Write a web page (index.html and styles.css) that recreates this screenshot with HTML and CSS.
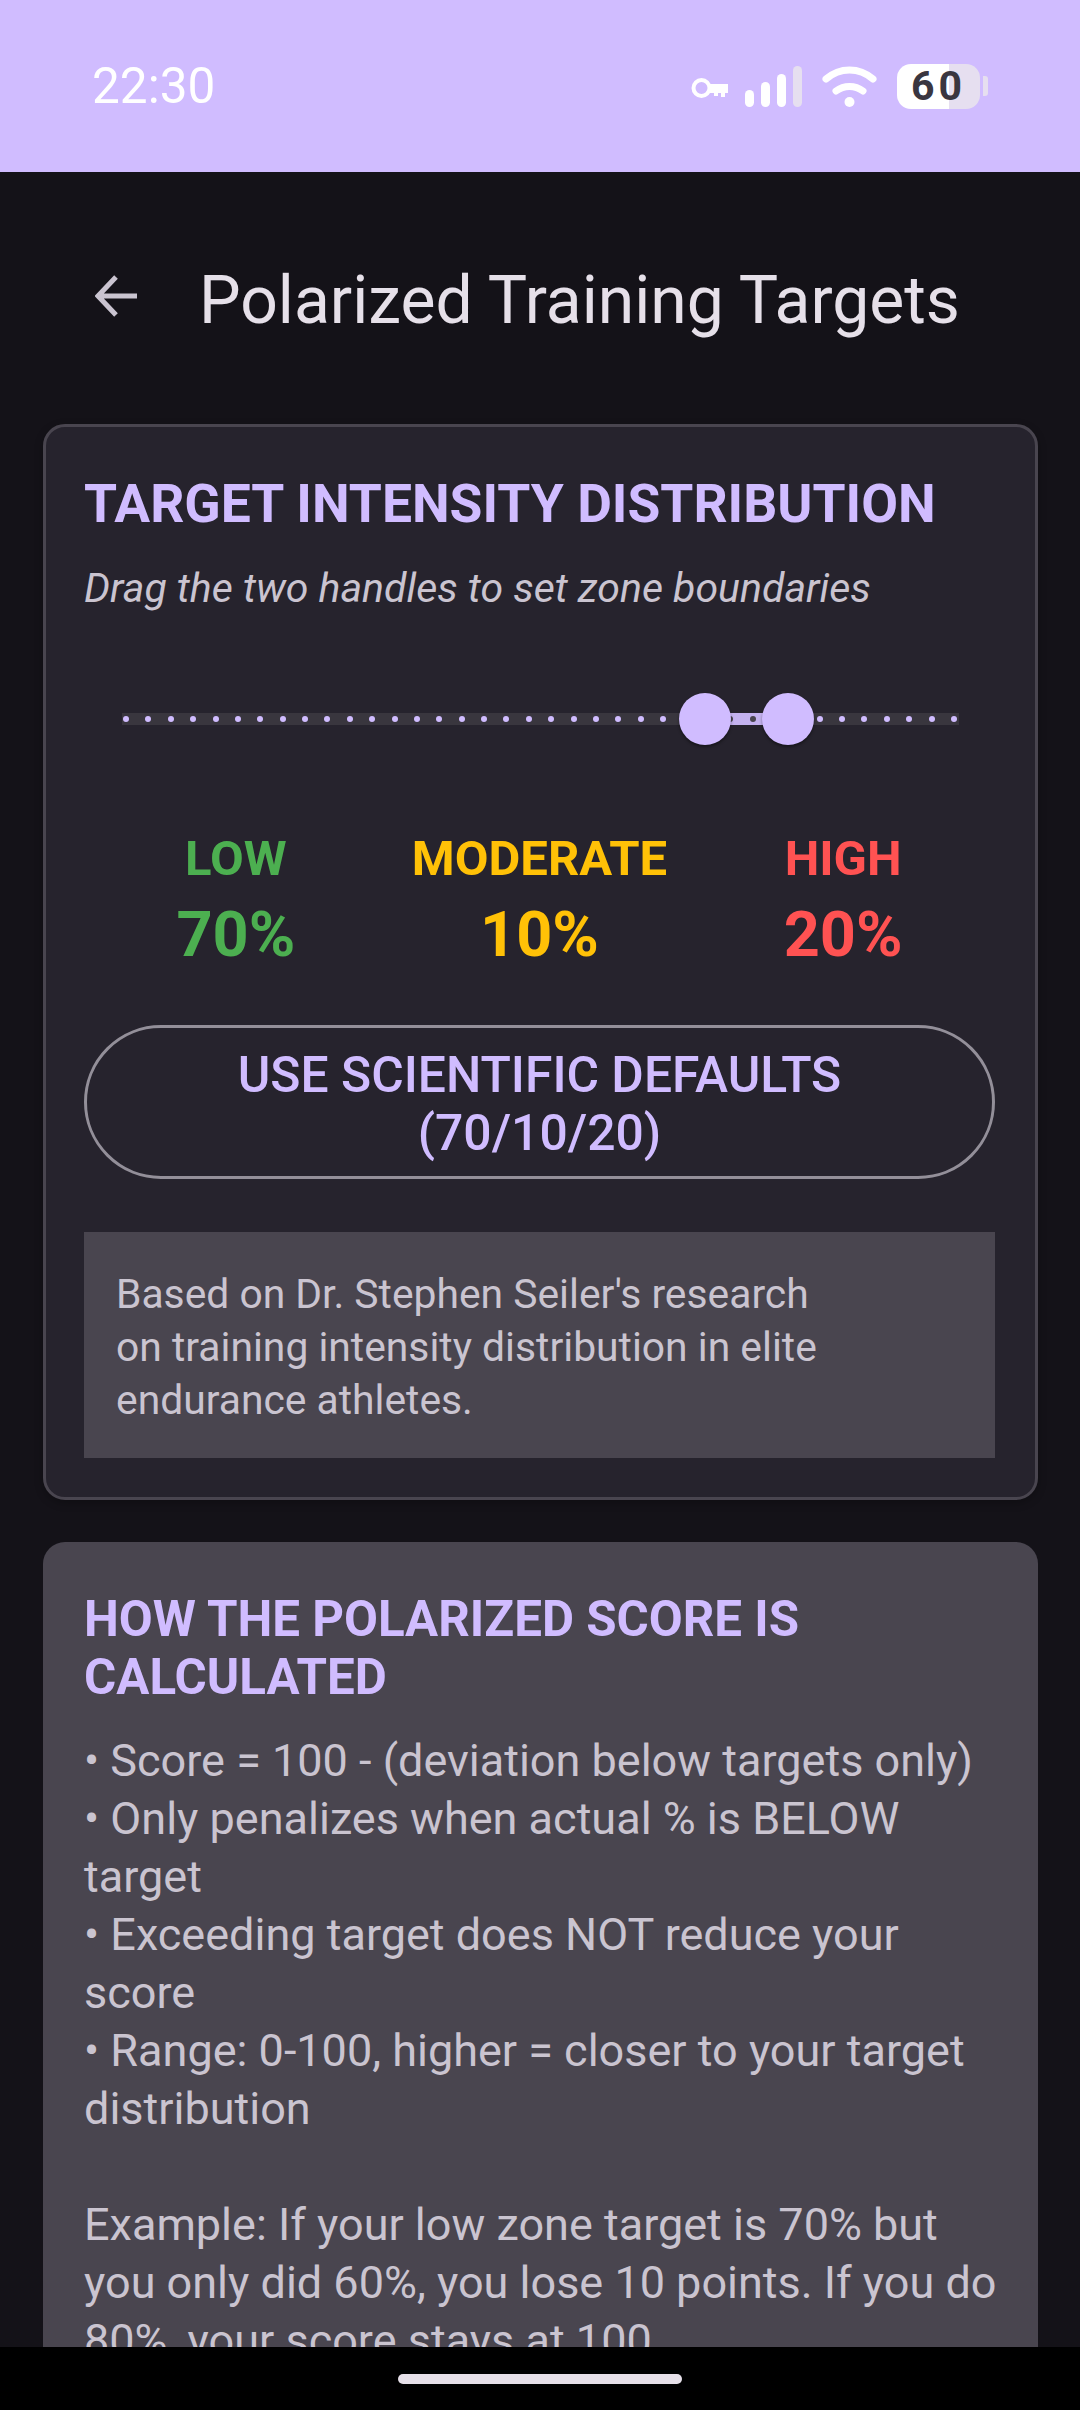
FILE: index.html
```html
<!DOCTYPE html>
<html lang="en">
<head>
    <meta charset="UTF-8">
    <meta name="viewport" content="width=device-width, initial-scale=1.0">
    <title>Polarized Training Targets</title>
    <link rel="stylesheet" href="styles.css">
</head>
<body>
    <div class="status-bar">
        <span class="clock">22:30</span>
        <div class="status-icons">
            <!-- VPN key -->
            <svg class="icon-key" width="37" height="22" viewBox="0 0 37 22">
                <circle cx="10.5" cy="11" r="8" fill="none" stroke="#fff" stroke-width="4"/>
                <path d="M18 7h19v9h-3v4h-4v-4h-3v3h-4v-3h-5z" fill="#fff"/>
            </svg>
            <!-- Signal -->
            <svg class="icon-signal" width="57" height="41" viewBox="0 0 57 41">
                <rect x="0" y="24" width="9" height="17" rx="4.5" fill="#fff"/>
                <rect x="16" y="16" width="9" height="25" rx="4.5" fill="#fff"/>
                <rect x="32" y="8" width="9" height="33" rx="4.5" fill="#fff"/>
                <rect x="48" y="0" width="9" height="41" rx="4.5" fill="#e6dff0"/>
            </svg>
            <!-- Wifi -->
            <svg class="icon-wifi" width="55" height="41" viewBox="0 0 55 41">
                <path d="M4 13C18 1 37 1 51 13" fill="none" stroke="#fff" stroke-width="7" stroke-linecap="round"/>
                <path d="M14 25C22 19 33 19 41 25" fill="none" stroke="#fff" stroke-width="7" stroke-linecap="round"/>
                <circle cx="27.5" cy="36" r="5" fill="#fff"/>
            </svg>
            <div class="battery">
                <div class="battery-body"><span class="battery-level">60</span></div>
                <div class="battery-tip"></div>
            </div>
        </div>
    </div>

    <div class="screen">
        <header class="app-bar">
            <svg class="back" width="42" height="42" viewBox="0 0 42 42">
                <path d="M42 21H4M21 2L3 21l18 19" fill="none" stroke="#cac4d0" stroke-width="5"/>
            </svg>
            <h1>Polarized Training Targets</h1>
        </header>

        <section class="card card-outline">
            <h2>TARGET INTENSITY DISTRIBUTION</h2>
            <p class="hint">Drag the two handles to set zone boundaries</p>

            <div class="slider">
                <div class="track">
                    <div class="track-active"></div>
                    <div class="ticks" id="ticks"></div>
                </div>
                <div class="thumb thumb-low"></div>
                <div class="thumb thumb-high"></div>
            </div>

            <div class="zones">
                <div class="zone zone-low"><span>LOW</span><strong>70%</strong></div>
                <div class="zone zone-moderate"><span>MODERATE</span><strong>10%</strong></div>
                <div class="zone zone-high"><span>HIGH</span><strong>20%</strong></div>
            </div>

            <button class="defaults">USE SCIENTIFIC DEFAULTS (70/10/20)</button>

            <p class="note">Based on Dr. Stephen Seiler's research on training intensity distribution in elite endurance athletes.</p>
        </section>

        <section class="card card-filled">
            <h2>HOW THE POLARIZED SCORE IS CALCULATED</h2>
            <p class="explain">• Score = 100 - (deviation below targets only)
• Only penalizes when actual % is BELOW target
• Exceeding target does NOT reduce your score
• Range: 0-100, higher = closer to your target distribution

Example: If your low zone target is 70% but you only did 60%, you lose 10 points. If you do 80%, your score stays at 100.</p>
        </section>
    </div>

    <div class="nav-bar"><div class="nav-handle"></div></div>

    <script>
        // 38 ticks on the slider, the ones between the handles are dark
        const ticks = document.getElementById('ticks');
        for (let i = 0; i < 38; i++) {
            const tick = document.createElement('i');
            if (i >= 26 && i <= 29) tick.className = 'on';
            ticks.appendChild(tick);
        }
    </script>
</body>
</html>
```

FILE: styles.css
```css
* {
    box-sizing: border-box;
}

body {
    margin: 0;
    width: 1080px;
    height: 2410px;
    display: flex;
    flex-direction: column;
    overflow: hidden;
    font-family: Roboto, sans-serif;
    background-color: #141218;
    color: #e6e0e9;
}

.status-bar {
    height: 172px;
    flex: none;
    background-color: #d0bcff;
    display: flex;
    justify-content: space-between;
    align-items: center;
    padding: 0 92px 0 92px;
    color: #fff;
}

.clock {
    font-size: 49.5px;
}

.status-icons {
    display: flex;
    align-items: center;
}

.icon-key {
    margin-right: 17px;
    margin-top: 4px;
}

.icon-signal {
    margin-right: 20px;
}

.icon-wifi {
    margin-right: 20px;
}

.battery {
    display: flex;
    align-items: center;
    gap: 3px;
}

.battery-body {
    width: 83px;
    height: 45px;
    border-radius: 14px;
    background: linear-gradient(to right, #fff 0, #fff 52px, #e6dff0 52px);
    color: #3a3640;
    font-size: 41px;
    font-weight: 700;
    letter-spacing: 4px;
    line-height: 45px;
    text-align: center;
}

.battery-tip {
    width: 5px;
    height: 20px;
    border-radius: 0 3px 3px 0;
    background-color: #e6dff0;
}

.screen {
    flex: 1;
    min-height: 0;
    overflow: hidden;
    padding: 0 43px;
}

.app-bar {
    height: 252px;
    margin: 0 -43px;
    padding: 0 0 0 95px;
    display: flex;
    align-items: center;
}

.back {
    flex: none;
    margin-right: 62px;
    margin-top: -5px;
}

.app-bar h1 {
    margin: 5px 0 0;
    font-size: 66px;
    font-weight: 400;
}

.card {
    border-radius: 22px;
    width: 995px;
}

.card h2 {
    margin: 0;
    line-height: 58px;
    font-weight: 700;
    color: #d0bcff;
}

.card-outline {
    background-color: #26232d;
    border: 3px solid #49454f;
    box-shadow: 0 3px 8px rgba(0, 0, 0, 0.25);
    padding: 48px 40px 39px 38px;
    margin-bottom: 42px;
}

.card-outline h2 {
    font-size: 53.4px;
}

.hint {
    margin: 30px 0 0;
    font-size: 41px;
    line-height: 50px;
    font-style: italic;
    color: #cac4d0;
}

.slider {
    position: relative;
    height: 76px;
    margin-top: 68px;
    padding: 32px 36px 0 38px;
}

.track {
    position: relative;
    height: 12px;
    background-color: #39363e;
}

.track-active {
    position: absolute;
    left: 583px;
    width: 83px;
    top: 0;
    bottom: 0;
    background-color: #c4b2ef;
}

.ticks {
    position: absolute;
    inset: 0;
    padding: 0 2px 0 1px;
    display: flex;
    justify-content: space-between;
    align-items: center;
}

.ticks i {
    width: 6px;
    height: 6px;
    border-radius: 50%;
    background-color: #d0bcff;
}

.ticks i.on {
    background-color: #49454f;
}

.thumb {
    position: absolute;
    top: 12px;
    width: 52px;
    height: 52px;
    border-radius: 50%;
    background-color: #d0bcff;
    box-shadow: 0 2px 3px rgba(0, 0, 0, 0.4);
}

.thumb-low {
    left: 595px;
}

.thumb-high {
    left: 678px;
}

.zones {
    display: grid;
    grid-template-columns: 1fr 1fr 1fr;
    margin-top: 73px;
    text-align: center;
}

.zone span {
    display: block;
    font-size: 49px;
    line-height: 58px;
    font-weight: 700;
}

.zone strong {
    display: block;
    margin-top: 10px;
    font-size: 63px;
    line-height: 74px;
    font-weight: 700;
}

.zone-low {
    color: #4caf50;
}

.zone-moderate {
    color: #ffc107;
}

.zone-high {
    color: #ff5252;
}

.defaults {
    display: block;
    width: 100%;
    height: 154px;
    margin-top: 53px;
    padding: 3px 120px 0;
    border: 3px solid #938f99;
    border-radius: 77px;
    background: none;
    font-family: inherit;
    font-size: 49.8px;
    line-height: 58px;
    font-weight: 500;
    color: #d0bcff;
}

.note {
    margin: 53px 0 0;
    padding: 36px 150px 31px 32px;
    background-color: #49454f;
    font-size: 40.8px;
    line-height: 53px;
    color: #cac4d0;
}

.card-filled {
    background-color: #49454f;
    padding: 48px 30px 46px 41px;
}

.card-filled h2 {
    font-size: 49.3px;
}

.explain {
    margin: 26px 0 0;
    font-size: 45px;
    line-height: 58px;
    color: #cac4d0;
    white-space: pre-line;
}

.nav-bar {
    height: 63px;
    flex: none;
    background-color: #000;
    padding-top: 27px;
}

.nav-handle {
    width: 284px;
    height: 10px;
    margin: 0 auto;
    border-radius: 5px;
    background-color: #e6e0e9;
}
```
